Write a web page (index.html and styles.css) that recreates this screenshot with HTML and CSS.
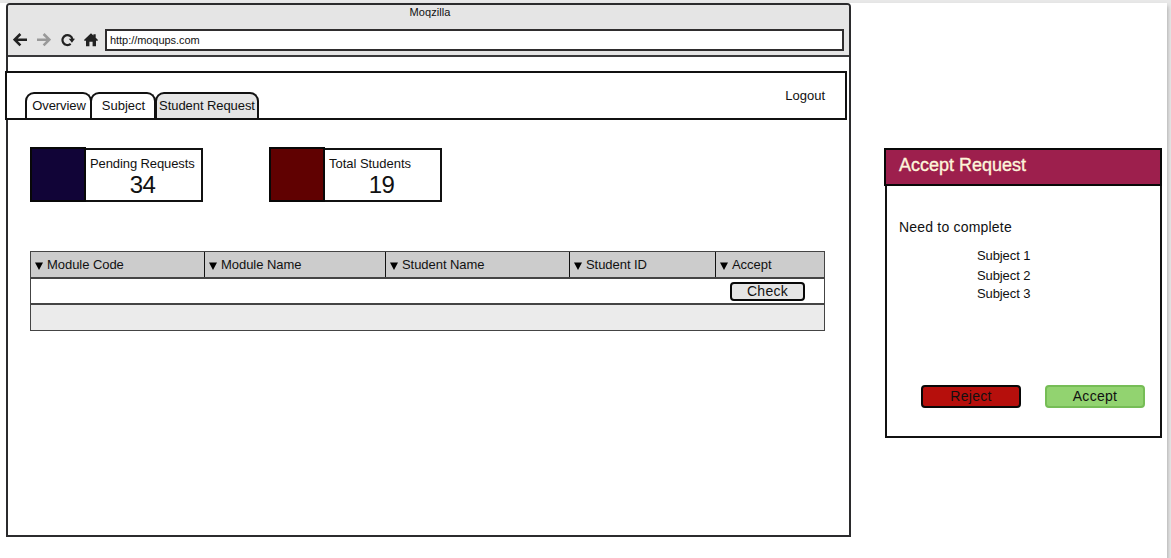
FILE: index.html
```html
<!DOCTYPE html>
<html lang="en">
<head>
<meta charset="utf-8">
<title>Student Request</title>
<link rel="stylesheet" href="styles.css">
</head>
<body>
<main class="sheet">
  <section class="browser">
    <header class="chrome">
      <div class="chrome-title">Moqzilla</div>
      <div class="toolbar">
        <svg class="icon" viewBox="0 0 14 14"><path d="M7.4 1 1.700 6.700l5.700 5.700M2 6.700h12" fill="none" stroke="#222" stroke-width="2.600"/></svg>
        <svg class="icon" viewBox="0 0 14 14"><path d="M6.600 1 12.300 6.700l-5.700 5.700M12 6.700H0" fill="none" stroke="#999" stroke-width="2.600"/></svg>
        <svg class="icon" viewBox="0 0 14 14"><path d="M9.700 10.900A5 5 0 1 1 11.400 6.100" fill="none" stroke="#222" stroke-width="2.200"/><path d="M7.800 5.800H14l-3.100 4z" fill="#222"/></svg>
        <svg class="icon" viewBox="0 0 14 14"><path d="M7 .3 9.400 2.600V1.300h2.300v3.400L13.800 6.700v1.100H12V13.200H8.600V8.700H5.400v4.500H2V7.800H.2V6.700z" fill="#222"/></svg>
        <div class="address">http://moqups.com</div>
      </div>
    </header>
    <nav class="navbar">
      <div class="tabs">
        <a class="tab tab-overview">Overview</a>
        <a class="tab tab-subject">Subject</a>
        <a class="tab tab-request">Student Request</a>
      </div>
      <a class="logout">Logout</a>
    </nav>
    <div class="stats">
      <div class="stat">
        <div class="swatch swatch-navy"></div>
        <div class="stat-body"><div class="stat-label">Pending Requests</div><div class="stat-value">34</div></div>
      </div>
      <div class="stat">
        <div class="swatch swatch-maroon"></div>
        <div class="stat-body"><div class="stat-label stat-label-total">Total Students</div><div class="stat-value">19</div></div>
      </div>
    </div>
    <div class="table">
      <div class="row row-head">
        <div class="cell"><svg class="sort" viewBox="0 0 8 8"><path d="M0 .5h8L4 8z"/></svg>Module Code</div>
        <div class="cell"><svg class="sort" viewBox="0 0 8 8"><path d="M0 .5h8L4 8z"/></svg>Module Name</div>
        <div class="cell"><svg class="sort" viewBox="0 0 8 8"><path d="M0 .5h8L4 8z"/></svg>Student Name</div>
        <div class="cell"><svg class="sort" viewBox="0 0 8 8"><path d="M0 .5h8L4 8z"/></svg>Student ID</div>
        <div class="cell"><svg class="sort" viewBox="0 0 8 8"><path d="M0 .5h8L4 8z"/></svg>Accept</div>
      </div>
      <div class="row row-item"><button class="button button-check">Check</button></div>
      <div class="row row-alt"></div>
    </div>
  </section>
  <aside class="dialog">
    <h1 class="dialog-title">Accept Request</h1>
    <div class="dialog-body">
      <p class="lead">Need to complete</p>
      <ul class="subjects">
        <li>Subject 1</li>
        <li>Subject 2</li>
        <li>Subject 3</li>
      </ul>
      <div class="actions">
        <button class="button button-reject">Reject</button>
        <button class="button button-accept">Accept</button>
      </div>
    </div>
  </aside>
</main>
</body>
</html>
```
FILE: styles.css
```css
* { box-sizing: border-box; }
body {
  margin: 0;
  padding-top: 3px;
  height: 558px;
  overflow: hidden;
  background: #e8e8e8;
  font: 13px/15px "Liberation Sans", Arial, sans-serif;
  color: #111;
}
.sheet {
  display: flex;
  align-items: flex-start;
  width: 1167px;
  height: 570px;
  padding-left: 6px;
  background: #fff;
  box-shadow: 1px 3px 4px rgba(0, 0, 0, .25);
}
.browser {
  width: 845px;
  height: 534px;
  border: 2px solid #2b2b2d;
  border-radius: 4px 4px 0 0;
}
.chrome {
  height: 52px;
  background: #e5e5e5;
  border-bottom: 2px solid #39393b;
  border-radius: 2px 2px 0 0;
}
.chrome-title {
  height: 24px;
  font-size: 11px;
  text-align: center;
  padding-left: 3px;
  letter-spacing: .08px;
}
.toolbar { display: flex; align-items: center; padding-left: 5px; }
.icon { width: 14px; height: 14px; margin-right: 10px; }
.icon:nth-child(4) { margin-right: 7px; margin-left: -1px; }
.address {
  width: 739px;
  height: 22px;
  padding: 2px 3px;
  border: 2px solid #2f2d2e;
  background: #fff;
  font-size: 11px;
  letter-spacing: -.05px;
}
.navbar {
  display: flex;
  justify-content: space-between;
  width: 842px;
  height: 49px;
  margin: 14px 0 0 -3px;
  padding: 0 20px 0 18px;
  border: 2px solid #111;
  background: #fff;
}
.tabs { display: flex; align-self: flex-end; }
.tab {
  height: 26px;
  padding-top: 4px;
  border: 2px solid #111;
  border-bottom: 0;
  border-radius: 9px 9px 0 0;
  text-align: center;
  white-space: nowrap;
}
.tab-overview { width: 67px; padding-left: 1px; letter-spacing: -.1px; }
.tab-subject { width: 66px; margin-left: -2px; padding-left: 1px; }
.tab-request { width: 104px; margin-left: -1px; background: #e5e5e5; letter-spacing: -.07px; }
.logout { padding-top: 15px; }
.stats { display: flex; gap: 66px; padding: 27px 0 0 22px; }
.stat { display: flex; align-items: flex-end; width: 173px; height: 55px; }
.swatch { width: 56px; height: 55px; border: 2px solid #080808; }
.swatch-navy { background: #110437; }
.swatch-maroon { background: #600101; }
.stat-body {
  flex: 1;
  height: 54px;
  padding-top: 6px;
  border: 2px solid #111;
  border-left: 0;
}
.stat-label { padding-left: 4px; letter-spacing: -.1px; white-space: nowrap; }
.stat-label-total { letter-spacing: -.03px; }
.stat-value { font-size: 24px; line-height: 28px; text-align: center; padding-right: 2px; letter-spacing: -.6px; }
.table { width: 795px; margin: 49px 0 0 22px; border: 1px solid #444; }
.row { width: 793px; }
.row-head {
  display: grid;
  grid-template-columns: 174px 181px 184px 146px 108px;
  height: 27px;
  background: #ccc;
  border-bottom: 2px solid #444;
  letter-spacing: -.05px;
}
.cell { display: flex; align-items: center; padding: 0 0 0 4px; border-right: 1px solid #111; }
.cell:last-child { border-right: 0; }
.sort { width: 8px; height: 8px; margin: 3px 4px 0 0; fill: #000; }
.row-item { height: 26px; padding: 3px 0 0 699px; border-bottom: 2px solid #444; }
.row-alt { height: 25px; background: #ebebeb; }
.button {
  display: block;
  padding: 0;
  border: 2px solid #080808;
  border-radius: 4px;
  font: 14px/16px "Liberation Sans", Arial, sans-serif;
  letter-spacing: .3px;
  color: #111;
}
.button-check { width: 75px; height: 19px; background: #e5e5e5; line-height: 15px; }
.dialog {
  width: 278px;
  height: 290px;
  margin: 145px 0 0 33px;
}
.dialog-title {
  height: 38px;
  margin: 0;
  padding: 5px 13px;
  border: 2px solid #080808;
  background: #9d1f4d;
  color: #fdf5da;
  font-size: 18px;
  font-weight: 400;
  line-height: 20px;
  -webkit-text-stroke: .35px #fdf5da;
}
.dialog-body {
  height: 252px;
  margin-left: 1px;
  padding: 33px 0 0 12px;
  border: 2px solid #111;
  border-top: 0;
}
.lead { margin: 0 0 11px; font-size: 14px; line-height: 16px; letter-spacing: .2px; }
.subjects { margin: 0; padding: 0 0 0 78px; list-style: none; line-height: 18px; letter-spacing: -.1px; }
.subjects li:first-child { line-height: 20px; }
.subjects li:nth-child(2) { line-height: 19px; }
.actions { display: flex; gap: 24px; padding: 82px 0 0 22px; }
.button-reject, .button-accept { width: 100px; height: 23px; padding-bottom: 2px; }
.button-reject { background: #b60f0c; }
.button-accept { background: #92d370; border-color: #76bd56; }
```
